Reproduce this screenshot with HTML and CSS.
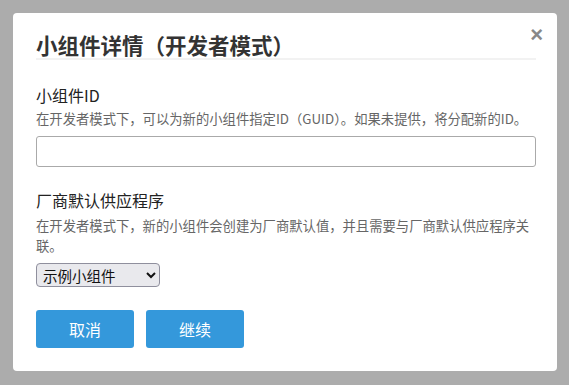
FILE: index.html
```html
<!DOCTYPE html>
<html lang="zh-CN">
  <head>
    <meta charset="UTF-8" />
    <meta name="viewport" content="width=device-width, initial-scale=1.0" />
    <title>小组件详情</title>
    <link rel="stylesheet" href="styles.css">
  </head>
  <body>
    <div class="modal">
      <span class="close">&times;</span>
      <h2 class="modal-title">小组件详情（开发者模式）</h2>

      <div class="field">
        <label class="field-label" for="widget-id">小组件ID</label>
        <p class="field-help">在开发者模式下，可以为新的小组件指定ID（GUID）。如果未提供，将分配新的ID。</p>
        <input class="text-input" id="widget-id" type="text" />
      </div>

      <div class="field">
        <label class="field-label" for="provider">厂商默认供应程序</label>
        <p class="field-help">在开发者模式下，新的小组件会创建为厂商默认值，并且需要与厂商默认供应程序关联。</p>
        <select class="select" id="provider">
          <option>示例小组件</option>
        </select>
      </div>

      <div class="actions">
        <button class="btn">取消</button>
        <button class="btn">继续</button>
      </div>
    </div>
  </body>
</html>
```

FILE: styles.css
```css
* {
  margin: 0;
  padding: 0;
  box-sizing: border-box;
}
body {
  background: #acacac;
  padding: 13px 12px 13px 13px;
  font-family: "Noto Sans CJK SC", "Noto Sans", sans-serif;
  color: #222;
}
.modal {
  position: relative;
  background: #fff;
  border-radius: 4px;
  padding: 19px 21px 23px 23px;
  height: 358px;
}
.close {
  position: absolute;
  top: 11px;
  right: 14px;
  font: bold 22px/1 "Liberation Sans", sans-serif;
  color: #888;
}
.modal-title {
  font-size: 21.5px;
  font-weight: bold;
  line-height: 26px;
  color: #333;
  border-bottom: 2px solid #f2f2f2;
}
.field {
  margin-top: 23px;
}
.field + .field {
  margin-top: 21px;
}
.field-label {
  display: block;
  font-size: 16px;
  line-height: 24px;
  color: #222;
}
.field-help {
  font-size: 13.33px;
  line-height: 20px;
  color: #666;
  margin-top: 2px;
}
.field + .field .field-help {
  margin-top: 4px;
}
.text-input {
  display: block;
  width: 100%;
  height: 31px;
  margin-top: 7px;
  border: 1px solid #aaa;
  border-radius: 3px;
  background: #fff;
}
.select {
  display: block;
  width: 124px;
  height: 24px;
  margin-top: 7px;
  font-family: "Noto Sans CJK SC", sans-serif;
  font-size: 14.5px;
  color: #111;
  background: #e9e9ed;
  border: 1px solid #8f8f9d;
  border-radius: 4px;
  padding: 0 2px;
}
.actions {
  display: flex;
  gap: 12px;
  margin-top: 23px;
}
.btn {
  width: 98px;
  height: 38px;
  border: none;
  border-radius: 3px;
  background: #3498db;
  color: #fff;
  font-family: "Noto Sans CJK SC", sans-serif;
  font-size: 16px;
}
```
